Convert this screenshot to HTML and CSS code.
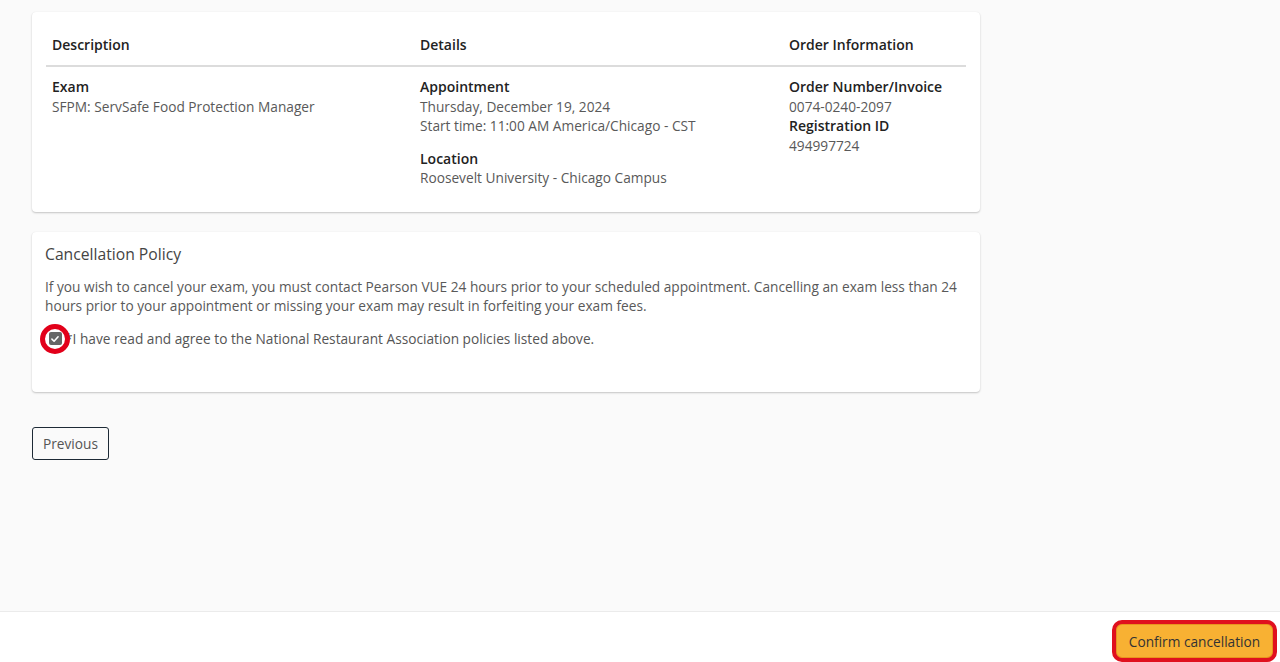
FILE: index.html
```html
<!DOCTYPE html>
<html lang="en">
<head>
<meta charset="utf-8">
<title>Cancel Appointment</title>
<link rel="stylesheet" href="styles.css">
</head>
<body>
<div class="page">
  <main class="main">
    <section class="card card-order">
      <div class="table">
        <div class="row head">
          <div class="cell">Description</div>
          <div class="cell">Details</div>
          <div class="cell">Order Information</div>
        </div>
        <div class="row body">
          <div class="cell">
            <div class="label">Exam</div>
            <div class="value">SFPM: ServSafe Food Protection Manager</div>
          </div>
          <div class="cell">
            <div class="label">Appointment</div>
            <div class="value">Thursday, December 19, 2024</div>
            <div class="value">Start time: 11:00 AM America/Chicago - CST</div>
            <div class="label gap">Location</div>
            <div class="value">Roosevelt University - Chicago Campus</div>
          </div>
          <div class="cell">
            <div class="label">Order Number/Invoice</div>
            <div class="value">0074-0240-2097</div>
            <div class="label">Registration ID</div>
            <div class="value">494997724</div>
          </div>
        </div>
      </div>
    </section>

    <section class="card card-policy">
      <h2 class="policy-title">Cancellation Policy</h2>
      <p class="policy-text">If you wish to cancel your exam, you must contact Pearson VUE 24 hours prior to your scheduled appointment. Cancelling an exam less than 24 hours prior to your appointment or missing your exam may result in forfeiting your exam fees.</p>
      <label class="agree">
        <span class="check-wrap">
          <span class="check">
            <svg viewBox="0 0 12 12" width="10" height="10"><path d="M2.3 6.2 L4.9 8.7 L9.7 3.4" fill="none" stroke="#fff" stroke-width="1.9" stroke-linecap="round" stroke-linejoin="round"/></svg>
          </span>
        </span>
        <span class="agree-text">*I have read and agree to the National Restaurant Association policies listed above.</span>
      </label>
    </section>

    <div class="actions">
      <button class="btn-prev" type="button">Previous</button>
    </div>
  </main>

  <footer class="footer">
    <button class="btn-confirm" type="button">Confirm cancellation</button>
  </footer>
</div>
</body>
</html>
```

FILE: styles.css
```css
* { box-sizing: border-box; }

html, body {
  margin: 0;
  padding: 0;
}

body {
  font-family: "Open Sans", "Liberation Sans", Arial, sans-serif;
  font-size: 13.7px;
  line-height: 19.5px;
  color: #595959;
  background: #fafafa;
}

.page {
  min-height: 100vh;
  display: flex;
  flex-direction: column;
}

.main {
  flex: 1;
  padding: 12px 300px 0 32px;
}

.card {
  background: #fff;
  width: 948px;
  border-radius: 4px;
  box-shadow: 0 1px 2px rgba(0, 0, 0, 0.22), 0 0 1px rgba(0, 0, 0, 0.06);
}

.card-order {
  padding: 14px 14px 14px;
}

.table {
  display: flex;
  flex-direction: column;
}

.row {
  display: grid;
  grid-template-columns: 368px 369px 183px;
}

.row.head {
  border-bottom: 2px solid #dcdcdc;
}

.row.head .cell {
  padding: 9px 6px 10px;
  font-size: 14px;
  font-weight: 600;
  color: #222;
  line-height: 20px;
}

.row.body .cell {
  padding: 10px 6px 10px;
}

.label {
  font-size: 14px;
  font-weight: 600;
  color: #222;
}

.label.gap {
  margin-top: 13px;
}

.value {
  color: #595959;
}

.card-policy {
  margin-top: 20px;
  padding: 11px 13px 43px;
}

.policy-title {
  margin: 0;
  font-size: 15.7px;
  font-weight: 400;
  line-height: 22px;
  color: #444;
}

.policy-text {
  margin: 12px 0 0;
  line-height: 19.5px;
  color: #595959;
  width: 925px;
}

.agree {
  margin-top: 13px;
  display: flex;
  align-items: center;
  line-height: 20px;
  height: 20px;
  color: #555;
}

.check-wrap {
  flex: none;
  width: 30px;
  height: 30px;
  border-radius: 50%;
  border: 5px solid #e2001a;
  background: #fff;
  display: flex;
  align-items: center;
  justify-content: center;
  margin: -5px -5px -5px -5px;
  position: relative;
  z-index: 1;
}

.check {
  width: 13px;
  height: 13px;
  border-radius: 2px;
  background: #666;
  display: flex;
  align-items: center;
  justify-content: center;
}

.actions {
  margin-top: 35px;
}

.btn-prev {
  font-family: inherit;
  font-size: 13.7px;
  color: #555;
  background: #fafafa;
  border: 1.5px solid #1d2a36;
  border-radius: 3px;
  height: 33px;
  padding: 0 10px;
  cursor: pointer;
}

.footer {
  height: 51px;
  border-top: 1px solid #ebebeb;
  background: #fff;
  display: flex;
  justify-content: flex-end;
  align-items: flex-end;
  padding-right: 3px;
}

.btn-confirm {
  font-family: inherit;
  font-size: 13.7px;
  color: #333;
  background: #f8b133;
  border: 4.5px solid #e0101e;
  border-radius: 10px;
  height: 42px;
  width: 165px;
  padding: 0;
  cursor: pointer;
  box-shadow: inset 0 0 0 1px #e8941f;
}
```
